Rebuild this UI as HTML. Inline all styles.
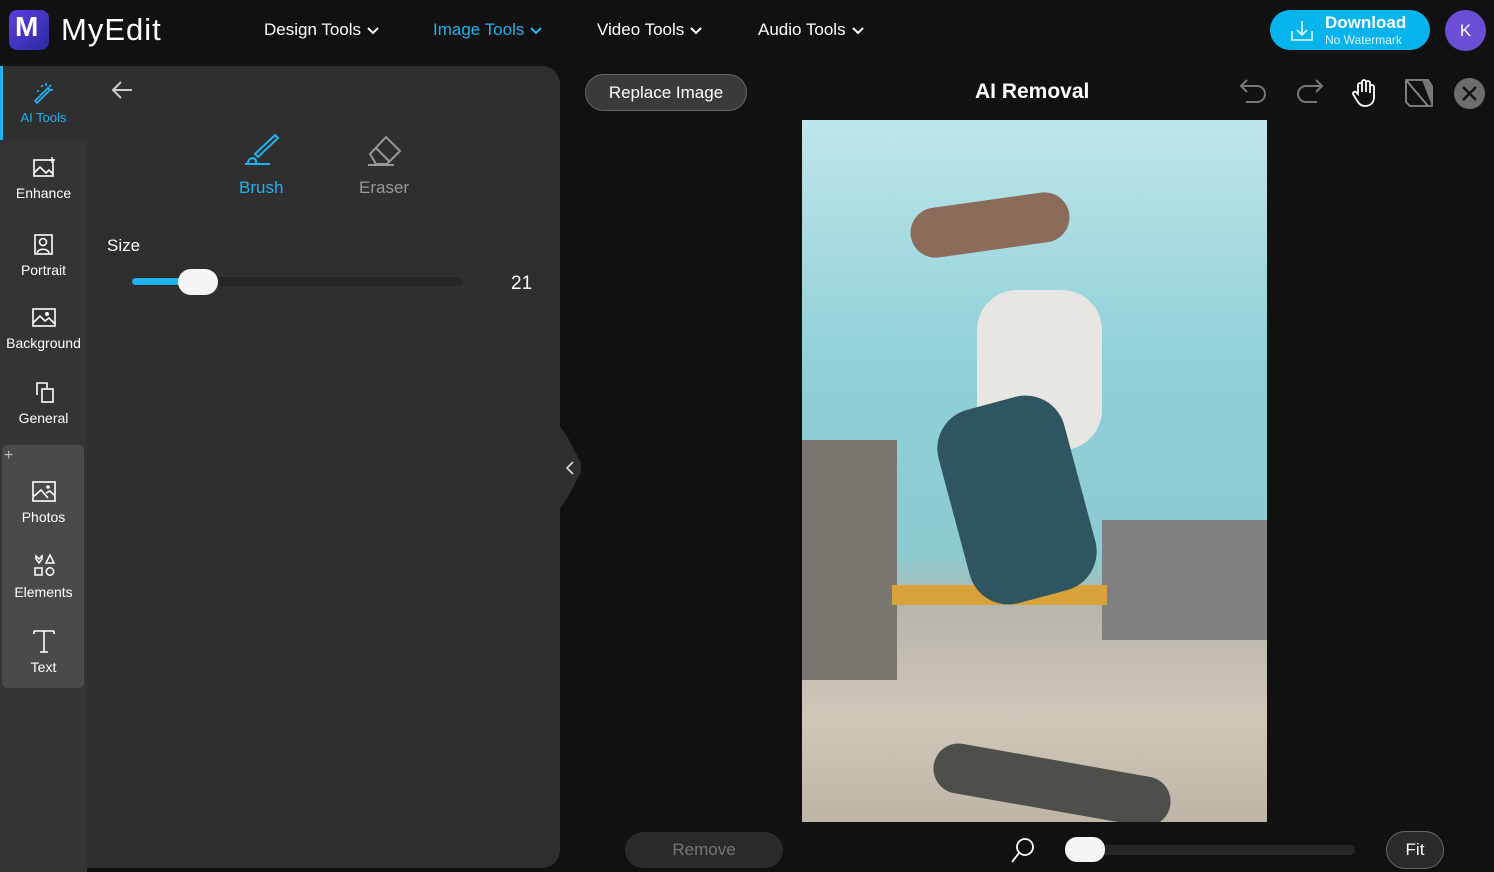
<!DOCTYPE html>
<html><head><meta charset="utf-8"><style>
*{box-sizing:border-box;margin:0;padding:0}
body{width:1494px;height:872px;background:#111;font-family:"Liberation Sans",sans-serif;color:#fff;position:relative;overflow:hidden}
.abs{position:absolute}
.nav{font-size:17px;top:20px;color:#fff}
.nav svg{vertical-align:middle;margin-left:6px}
.side{left:0;top:66px;width:87px;height:806px;background:#343434}
.panel{left:87px;top:66px;width:473px;height:802px;background:#2f2f2f;border-radius:0 18px 18px 0}
.item{position:absolute;left:0;width:87px;text-align:center;font-size:14px;color:#fff}
.item svg{display:block;margin:0 auto 5px}
</style></head><body>
<!-- header -->
<div class="abs" style="left:9px;top:10px;width:40px;height:40px;border-radius:8px;background:linear-gradient(135deg,#5b3fe0,#2a2aa0)"></div>
<div class="abs" style="left:15px;top:11px;font-size:28px;font-weight:bold;color:#fff">M</div>
<div class="abs" style="left:61px;top:12px;font-size:31px;letter-spacing:1px">MyEdit</div>
<div class="abs nav" style="left:264px">Design Tools<svg width="12" height="8"><path d="M1 1l5 5 5-5" stroke="#fff" stroke-width="2" fill="none"/></svg></div>
<div class="abs nav" style="left:433px;color:#1fb3f0">Image Tools<svg width="12" height="8"><path d="M1 1l5 5 5-5" stroke="#1fb3f0" stroke-width="2" fill="none"/></svg></div>
<div class="abs nav" style="left:597px">Video Tools<svg width="12" height="8"><path d="M1 1l5 5 5-5" stroke="#fff" stroke-width="2" fill="none"/></svg></div>
<div class="abs nav" style="left:758px">Audio Tools<svg width="12" height="8"><path d="M1 1l5 5 5-5" stroke="#fff" stroke-width="2" fill="none"/></svg></div>
<div class="abs" style="left:1270px;top:10px;width:160px;height:40px;border-radius:20px;background:#05b4ec"></div>
<svg class="abs" style="left:1290px;top:19px" width="24" height="24"><path d="M2 12v9h20v-9M12 2v14M7 11l5 5 5-5" stroke="#dff" stroke-width="1.6" fill="none"/></svg>
<div class="abs" style="left:1325px;top:13px;font-size:17px;font-weight:bold">Download</div>
<div class="abs" style="left:1325px;top:33px;font-size:12px;color:#dff5ff">No Watermark</div>
<div class="abs" style="left:1445px;top:10px;width:41px;height:41px;border-radius:50%;background:#6a4ed6;text-align:center;line-height:41px;font-size:17px">K</div>
<!-- sidebar -->
<div class="abs side"></div>
<div class="abs" style="left:0;top:66px;width:87px;height:74px;background:#2f2f2f"></div>
<div class="abs" style="left:0;top:66px;width:3px;height:74px;background:#1fb3f0"></div>
<div class="item" style="top:80px;color:#1fb3f0"><svg width="24" height="24"><path d="M3 21L16 8l2 2L5 23zM14 3v3M19 5l-2 2M21 10h-3M9 6h2M6 10v2" stroke="#1fb3f0" stroke-width="1.7" fill="none"/></svg><span style="font-size:13px">AI Tools</span></div>
<div class="item" style="top:156px"><svg width="26" height="24"><rect x="3" y="4" width="19" height="16" stroke="#fff" stroke-width="1.6" fill="none"/><path d="M3 17l6-6 6 6 3-3 4 4" stroke="#fff" stroke-width="1.6" fill="none"/><path d="M21 1v6M18 4h6" stroke="#fff" stroke-width="1.4"/></svg>Enhance</div>
<div class="item" style="top:231px"><svg width="26" height="26"><rect x="4" y="4" width="17" height="19" stroke="#fff" stroke-width="1.6" fill="none"/><circle cx="12" cy="11" r="3.5" stroke="#fff" stroke-width="1.6" fill="none"/><path d="M6 22c1-5 11-5 12 0" stroke="#fff" stroke-width="1.6" fill="none"/></svg>Portrait</div>
<div class="item" style="top:306px"><svg width="26" height="24"><rect x="2" y="3" width="22" height="17" stroke="#fff" stroke-width="1.6" fill="none"/><path d="M2 17l7-7 5 5 4-3 6 6" stroke="#fff" stroke-width="1.6" fill="none"/><circle cx="16" cy="8" r="2" fill="#fff"/></svg>Background</div>
<div class="item" style="top:381px"><svg width="26" height="24"><path d="M6 14V2h10v5" stroke="#fff" stroke-width="1.6" fill="none"/><rect x="11" y="8" width="11" height="13" stroke="#fff" stroke-width="1.6" fill="none"/></svg>General</div>
<div class="abs" style="left:2px;top:445px;width:82px;height:243px;background:#4a4a4a;border-radius:5px"></div>
<div class="abs" style="left:4px;top:447px;color:#bbb;font-size:16px">+</div>
<div class="item" style="top:480px"><svg width="26" height="24"><rect x="2" y="2" width="22" height="19" stroke="#fff" stroke-width="1.6" fill="none"/><path d="M2 17l8-7 7 8M15 13l4-2 5 5" stroke="#fff" stroke-width="1.6" fill="none"/><circle cx="17" cy="7" r="1.8" fill="#fff"/></svg>Photos</div>
<div class="item" style="top:553px"><svg width="26" height="26"><path d="M5 3l3 3 3-3v3l-3 4-3-4z" stroke="#fff" stroke-width="1.5" fill="none"/><path d="M19 2l4 8h-8z" stroke="#fff" stroke-width="1.5" fill="none"/><rect x="4" y="15" width="7" height="7" stroke="#fff" stroke-width="1.5" fill="none"/><circle cx="19" cy="18.5" r="3.7" stroke="#fff" stroke-width="1.5" fill="none"/></svg>Elements</div>
<div class="item" style="top:628px"><svg width="26" height="26"><path d="M3 3h20M13 3v22M9 24h8M3 3v3M23 3v3" stroke="#fff" stroke-width="1.6" fill="none"/></svg>Text</div>
<!-- panel -->
<div class="abs panel"></div>
<div class="abs" style="left:559px;top:425px;width:22px;height:85px;background:#2f2f2f;clip-path:polygon(0 0,40% 15%,100% 45%,100% 55%,40% 85%,0 100%)"></div>
<svg class="abs" style="left:565px;top:460px" width="10" height="16"><path d="M8 2L2 8l6 6" stroke="#ddd" stroke-width="1.6" fill="none"/></svg>
<svg class="abs" style="left:110px;top:79px" width="24" height="22"><path d="M22 11H3M11 3l-8 8 8 8" stroke="#ccc" stroke-width="2" fill="none"/></svg>
<svg class="abs" style="left:244px;top:134px" width="36" height="32"><path d="M11 20L31 1l3 3-20 19z" stroke="#1fb3f0" stroke-width="2" fill="none"/><path d="M1 30h25M4 29c0-5 7-7 8-2v3" stroke="#1fb3f0" stroke-width="2" fill="none"/></svg>
<div class="abs" style="left:239px;top:178px;font-size:17px;color:#1fb3f0">Brush</div>
<svg class="abs" style="left:366px;top:134px" width="38" height="32"><path d="M4 20L20 3l14 14-13 13H10z" stroke="#999" stroke-width="2" fill="none"/><path d="M10 14l14 14M2 31h26" stroke="#999" stroke-width="2"/></svg>
<div class="abs" style="left:359px;top:178px;font-size:17px;color:#999">Eraser</div>
<div class="abs" style="left:107px;top:236px;font-size:17px">Size</div>
<div class="abs" style="left:132px;top:277px;width:331px;height:9px;border-radius:5px;background:#262626"></div>
<div class="abs" style="left:132px;top:278px;width:66px;height:7px;border-radius:4px;background:#1fb3f0"></div>
<div class="abs" style="left:178px;top:269px;width:40px;height:26px;border-radius:13px;background:#f5f5f5"></div>
<div class="abs" style="left:511px;top:273px;font-size:19px">21</div>
<!-- canvas top -->
<div class="abs" style="left:585px;top:74px;width:162px;height:37px;border-radius:19px;background:#3a3a3a;border:1px solid #666;text-align:center;line-height:35px;font-size:17px">Replace Image</div>
<div class="abs" style="left:975px;top:80px;font-size:21px;font-weight:bold">AI Removal</div>
<svg class="abs" style="left:1238px;top:78px" width="32" height="30"><path d="M3 8h16a8 8 0 010 16H8M9 2L3 8l6 6" stroke="#777" stroke-width="2" fill="none"/></svg>
<svg class="abs" style="left:1293px;top:78px" width="32" height="30"><path d="M29 8H13a8 8 0 000 16h11M23 2l6 6-6 6" stroke="#777" stroke-width="2" fill="none"/></svg>
<svg class="abs" style="left:1352px;top:78px" width="26" height="30"><path d="M6 16V7a2 2 0 014 0v7V4a2 2 0 014 0v10V5a2 2 0 014 0v10V9a2 2 0 014 0v10c0 6-4 9-9 9-4 0-6-2-9-7l-3-5a2 2 0 013-2z" stroke="#fff" stroke-width="1.8" fill="#111"/></svg>
<svg class="abs" style="left:1404px;top:78px" width="30" height="30"><path d="M2 2h22l4 6v20H6l-4-4z" stroke="#888" stroke-width="1.8" fill="none"/><path d="M2 2l22 26" stroke="#888" stroke-width="1.8"/><path d="M18 2h6l4 6v20z" fill="#777"/></svg>
<div class="abs" style="left:1454px;top:78px;width:31px;height:31px;border-radius:50%;background:#6d6d6d"></div>
<svg class="abs" style="left:1461px;top:85px" width="17" height="17"><path d="M2 2l13 13M15 2L2 15" stroke="#111" stroke-width="2.5"/></svg>
<!-- photo -->
<div class="abs" style="left:802px;top:120px;width:465px;height:702px;overflow:hidden;background:linear-gradient(180deg,#bfe6ea 0%,#8fd0d8 35%,#8ccbd0 62%,#b9b5ac 70%,#cfc7b8 85%,#bdb5a6 100%)">
<div class="abs" style="left:0;top:320px;width:95px;height:240px;background:#7a7670"></div>
<div class="abs" style="left:300px;top:400px;width:165px;height:120px;background:#808080"></div>
<div class="abs" style="left:90px;top:465px;width:215px;height:20px;background:#d9a23a"></div>
<div class="abs" style="left:108px;top:80px;width:160px;height:50px;border-radius:25px;background:#8b6b5a;transform:rotate(-8deg)"></div>
<div class="abs" style="left:175px;top:170px;width:125px;height:160px;border-radius:40px;background:#e8e6e2"></div>
<div class="abs" style="left:150px;top:280px;width:130px;height:200px;border-radius:40px;background:#2f5660;transform:rotate(-15deg)"></div>
<div class="abs" style="left:130px;top:640px;width:240px;height:50px;border-radius:30px;background:#4e4e4a;transform:rotate(10deg)"></div>
</div>
<!-- bottom -->
<div class="abs" style="left:625px;top:832px;width:158px;height:36px;border-radius:18px;background:#2a2a2a;text-align:center;line-height:36px;font-size:17px;color:#777">Remove</div>
<svg class="abs" style="left:1010px;top:836px" width="26" height="28"><circle cx="15" cy="11" r="8" stroke="#fff" stroke-width="1.8" fill="none"/><path d="M9 17L2 26" stroke="#fff" stroke-width="1.8"/></svg>
<div class="abs" style="left:1100px;top:845px;width:255px;height:10px;border-radius:5px;background:#262626"></div>
<div class="abs" style="left:1065px;top:837px;width:40px;height:25px;border-radius:12px;background:#f5f5f5"></div>
<div class="abs" style="left:1386px;top:831px;width:58px;height:38px;border-radius:19px;background:#2a2a2a;border:1px solid #666;text-align:center;line-height:36px;font-size:17px">Fit</div>
</body></html>
